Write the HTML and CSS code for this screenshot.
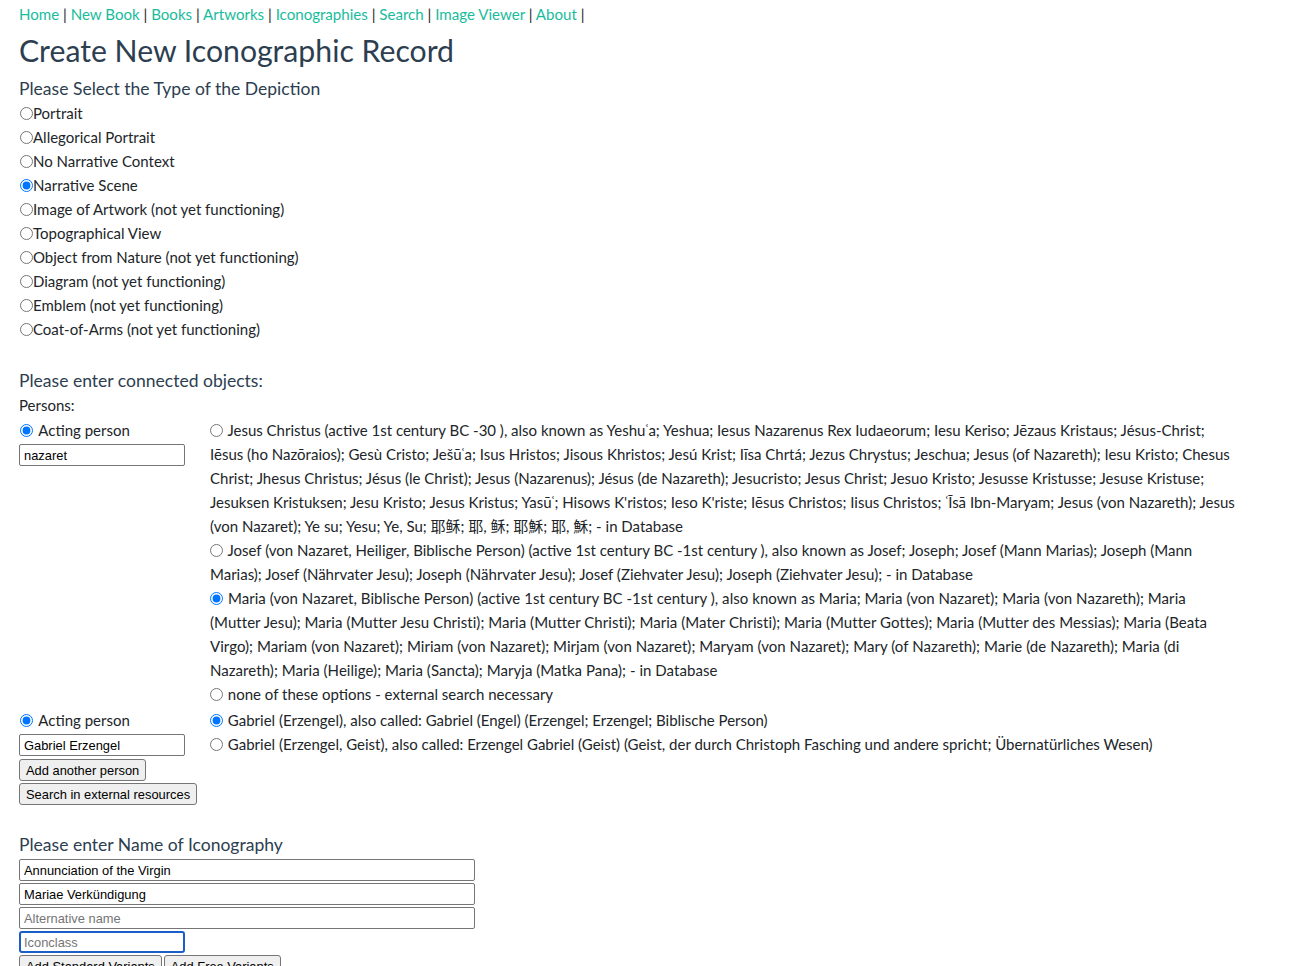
FILE: index.html
```html
<!DOCTYPE html>
<html lang="en">
<head>
<meta charset="utf-8">
<title>Create New Iconographic Record</title>
<link rel="stylesheet" href="styles.css">
</head>
<body>
<nav class="topnav">
  <a href="#">Home</a> | <a href="#">New Book</a> | <a href="#">Books</a> | <a href="#">Artworks</a> | <a href="#">Iconographies</a> | <a href="#">Search</a> | <a href="#">Image Viewer</a> | <a href="#">About</a> |
</nav>

<h1 class="page-title">Create New Iconographic Record</h1>

<h2 class="section-title first">Please Select the Type of the Depiction</h2>
<div class="type-list">
  <label class="type-option"><input type="radio" name="type" class="radio">Portrait</label>
  <label class="type-option"><input type="radio" name="type" class="radio">Allegorical Portrait</label>
  <label class="type-option"><input type="radio" name="type" class="radio">No Narrative Context</label>
  <label class="type-option"><input type="radio" name="type" class="radio" checked>Narrative Scene</label>
  <label class="type-option"><input type="radio" name="type" class="radio">Image of Artwork (not yet functioning)</label>
  <label class="type-option"><input type="radio" name="type" class="radio">Topographical View</label>
  <label class="type-option"><input type="radio" name="type" class="radio">Object from Nature (not yet functioning)</label>
  <label class="type-option"><input type="radio" name="type" class="radio">Diagram (not yet functioning)</label>
  <label class="type-option"><input type="radio" name="type" class="radio">Emblem (not yet functioning)</label>
  <label class="type-option"><input type="radio" name="type" class="radio">Coat-of-Arms (not yet functioning)</label>
</div>

<h2 class="section-title spaced">Please enter connected objects:</h2>
<div class="sub-label">Persons:</div>

<div class="person-row">
  <div class="person-left">
    <label class="role"><input type="radio" name="role1" class="radio" checked> Acting person</label>
    <input type="text" class="text-input small" value="nazaret">
  </div>
  <div class="person-right">
    <label class="candidate"><input type="radio" name="cand1" class="radio"> Jesus Christus (active 1st century BC -30 ), also known as Yeshuʿa; Yeshua; Iesus Nazarenus Rex Iudaeorum; Iesu Keriso; Jēzaus Kristaus; Jésus-Christ; Iēsus (ho Nazōraios); Gesù Cristo; Ješūʿa; Isus Hristos; Jisous Khristos; Jesú Krist; Iīsa Chrtá; Jezus Chrystus; Jeschua; Jesus (of Nazareth); Iesu Kristo; Chesus Christ; Jhesus Christus; Jésus (le Christ); Jesus (Nazarenus); Jésus (de Nazareth); Jesucristo; Jesus Christ; Jesuo Kristo; Jesusse Kristusse; Jesuse Kristuse; Jesuksen Kristuksen; Jesu Kristo; Jesus Kristus; Yasūʿ; Hisows K'ristos; Ieso K'riste; Iēsus Christos; Iisus Christos; ʿĪsā Ibn-Maryam; Jesus (von Nazareth); Jesus (von Nazaret); Ye su; Yesu; Ye, Su; 耶稣; 耶, 稣; 耶穌; 耶, 穌; - in Database</label>
    <label class="candidate"><input type="radio" name="cand1" class="radio"> Josef (von Nazaret, Heiliger, Biblische Person) (active 1st century BC -1st century ), also known as Josef; Joseph; Josef (Mann Marias); Joseph (Mann Marias); Josef (Nährvater Jesu); Joseph (Nährvater Jesu); Josef (Ziehvater Jesu); Joseph (Ziehvater Jesu); - in Database</label>
    <label class="candidate loose"><input type="radio" name="cand1" class="radio" checked> Maria (von Nazaret, Biblische Person) (active 1st century BC -1st century ), also known as Maria; Maria (von Nazaret); Maria (von Nazareth); Maria (Mutter Jesu); Maria (Mutter Jesu Christi); Maria (Mutter Christi); Maria (Mater Christi); Maria (Mutter Gottes); Maria (Mutter des Messias); Maria (Beata Virgo); Mariam (von Nazaret); Miriam (von Nazaret); Mirjam (von Nazaret); Maryam (von Nazaret); Mary (of Nazareth); Marie (de Nazareth); Maria (di Nazareth); Maria (Heilige); Maria (Sancta); Maryja (Matka Pana); - in Database</label>
    <label class="candidate"><input type="radio" name="cand1" class="radio"> none of these options - external search necessary</label>
  </div>
</div>

<div class="person-row second">
  <div class="person-left">
    <label class="role"><input type="radio" name="role2" class="radio" checked> Acting person</label>
    <input type="text" class="text-input small" value="Gabriel Erzengel">
    <button type="button" class="btn first">Add another person</button>
    <button type="button" class="btn">Search in external resources</button>
  </div>
  <div class="person-right">
    <label class="candidate"><input type="radio" name="cand2" class="radio" checked> Gabriel (Erzengel), also called: Gabriel (Engel) (Erzengel; Erzengel; Biblische Person)</label>
    <label class="candidate"><input type="radio" name="cand2" class="radio"> Gabriel (Erzengel, Geist), also called: Erzengel Gabriel (Geist) (Geist, der durch Christoph Fasching und andere spricht; Übernatürliches Wesen)</label>
  </div>
</div>

<h2 class="section-title spaced">Please enter Name of Iconography</h2>
<div class="name-fields">
  <input type="text" class="text-input wide" value="Annunciation of the Virgin">
  <input type="text" class="text-input wide" value="Mariae Verkündigung">
  <input type="text" class="text-input wide" placeholder="Alternative name">
  <input type="text" class="text-input small focused" placeholder="Iconclass">
  <div class="variant-buttons">
    <button type="button" class="btn">Add Standard Variants</button><button type="button" class="btn">Add Free Variants</button>
  </div>
</div>
</body>
</html>
```
FILE: styles.css
```css
html, body {
  margin: 0;
  padding: 0;
  background: #fff;
}
body {
  padding: 2px 19px 40px 19px;
  font-family: Lato, "Noto Sans CJK SC", sans-serif;
  font-size: 15px;
  line-height: 24px;
  color: #212529;
}
.topnav {
  line-height: 24px;
  font-size: 15.08px;
  color: #212529;
}
.topnav a {
  color: #18bc9c;
  text-decoration: none;
}
.page-title {
  margin: 5px 0 0 0;
  font-size: 30.2px;
  line-height: 38px;
  font-weight: 400;
  color: #2c3e50;
}
.section-title {
  margin: 0;
  font-size: 17.55px;
  line-height: 24px;
  font-weight: 400;
  color: #2c3e50;
}
.section-title.first {
  margin-top: 8px;
}
.section-title.spaced {
  margin-top: 28px;
}
.type-list {
  display: flex;
  flex-direction: column;
}
.type-option {
  display: block;
  height: 24px;
}
.radio {
  width: 13px;
  height: 13px;
  margin: 0 0 0 1px;
  vertical-align: -1px;
}
.role .radio {
  margin: 0 2px 0 1px;
}
.sub-label {
  line-height: 24px;
}
.person-row {
  display: flex;
  margin-top: 1px;
}
.person-row.second {
  margin-top: 2px;
}
.person-left {
  width: 191px;
  flex: none;
  display: flex;
  flex-direction: column;
  align-items: flex-start;
}
.person-right {
  width: 1026px;
  flex: none;
}
.role {
  display: block;
  height: 24px;
}
.candidate {
  display: block;
}
.candidate.loose {
  letter-spacing: 0.05px;
}
.candidate .radio {
  margin: 0 1px 0 0;
}
.text-input {
  display: block;
  box-sizing: border-box;
  height: 22px;
  padding: 1px 4px;
  border: 1px solid #767676;
  border-radius: 2px;
  font-family: "Liberation Sans", Arial, sans-serif;
  font-size: 12.9px;
  color: #000;
  background: #fff;
  margin: 2px 0 0 0;
}
.text-input::placeholder {
  color: #757575;
}
.text-input.small {
  width: 166px;
}
.text-input.wide {
  width: 456px;
}
.text-input.focused {
  border: 2px solid #1a5fc8;
  border-radius: 3px;
  padding: 0 3px;
}
.btn {
  box-sizing: border-box;
  height: 22px;
  padding: 1px 6px;
  border: 1px solid #767676;
  border-radius: 3px;
  background: #efefef;
  font-family: "Liberation Sans", Arial, sans-serif;
  font-size: 12.9px;
  color: #000;
  margin: 2px 0 0 0;
}
.btn.first {
  margin-top: 3px;
}
.name-fields {
  margin-top: 2px;
}
.name-fields .text-input:first-child {
  margin-top: 0;
}
.variant-buttons {
  display: flex;
  gap: 2px;
}
```
